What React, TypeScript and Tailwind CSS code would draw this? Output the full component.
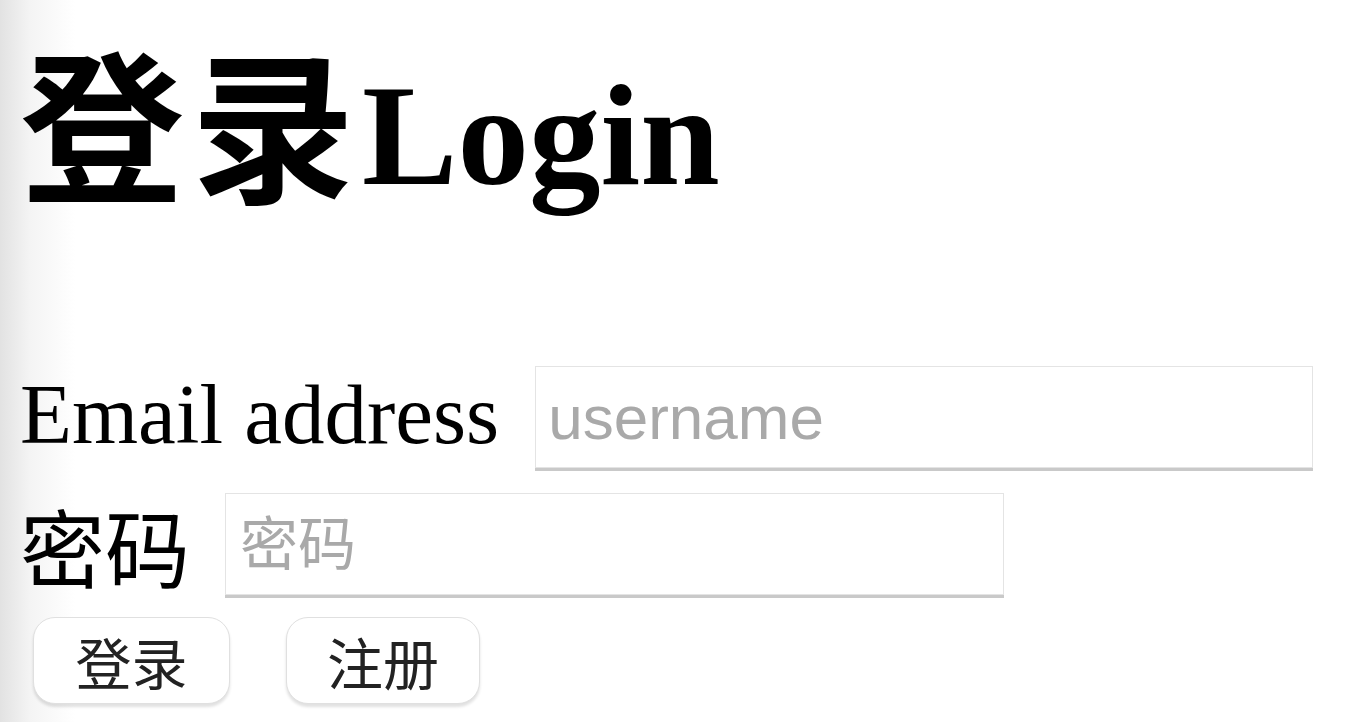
export default function App() {
  return (
    <div className="min-h-screen w-full bg-[linear-gradient(to_right,#e2e2e2_0px,#f4f4f4_30px,#ffffff_75px)] pl-[20px] font-['Liberation_Serif','Noto_Sans_CJK_SC',serif] text-black">
      <h1 className="flex h-[366px] items-start pt-[10px] font-bold leading-none">
        <span className="flex items-baseline">
          <span className="relative top-[6px] font-['Noto_Sans_CJK_SC',sans-serif] text-[164px] font-bold leading-[1.25] tracking-[7px]">登录</span>
          <span className="text-[143px] leading-[1.2]">Login</span>
        </span>
      </h1>

      <form className="flex flex-col">
        <div className="flex items-center gap-[36px]">
          <label className="-mt-[6px] text-[85px] leading-none">Email address</label>
          <input
            type="text"
            placeholder="username"
            className="h-[102px] w-[778px] border border-[#e4e4e4] bg-white px-[12px] font-['Liberation_Sans',sans-serif] text-[62px] shadow-[0_3px_0_#c9c9c9] outline-none placeholder:text-[#a9a9a9]"
          />
        </div>

        <div className="mt-[25px] flex items-center gap-[35px]">
          <label className="font-['Noto_Sans_CJK_SC',sans-serif] text-[85px] leading-none">密码</label>
          <input
            type="password"
            placeholder="密码"
            className="h-[102px] w-[779px] border border-[#e4e4e4] bg-white px-[14px] font-['Liberation_Sans','Noto_Sans_CJK_SC',sans-serif] text-[58px] shadow-[0_3px_0_#c9c9c9] outline-none placeholder:text-[#a9a9a9]"
          />
        </div>

        <div className="mt-[22px] flex gap-[56px] pl-[13px]">
          <button
            type="button"
            className="h-[87px] w-[197px] rounded-[22px] border border-[#e0e0e0] bg-white font-['Noto_Sans_CJK_SC',sans-serif] text-[56px] leading-none text-[#222] shadow-[0_3px_3px_rgba(0,0,0,0.12)]"
          >
            登录
          </button>
          <button
            type="button"
            className="h-[87px] w-[194px] rounded-[22px] border border-[#e0e0e0] bg-white font-['Noto_Sans_CJK_SC',sans-serif] text-[56px] leading-none text-[#222] shadow-[0_3px_3px_rgba(0,0,0,0.12)]"
          >
            注册
          </button>
        </div>
      </form>
    </div>
  );
}
